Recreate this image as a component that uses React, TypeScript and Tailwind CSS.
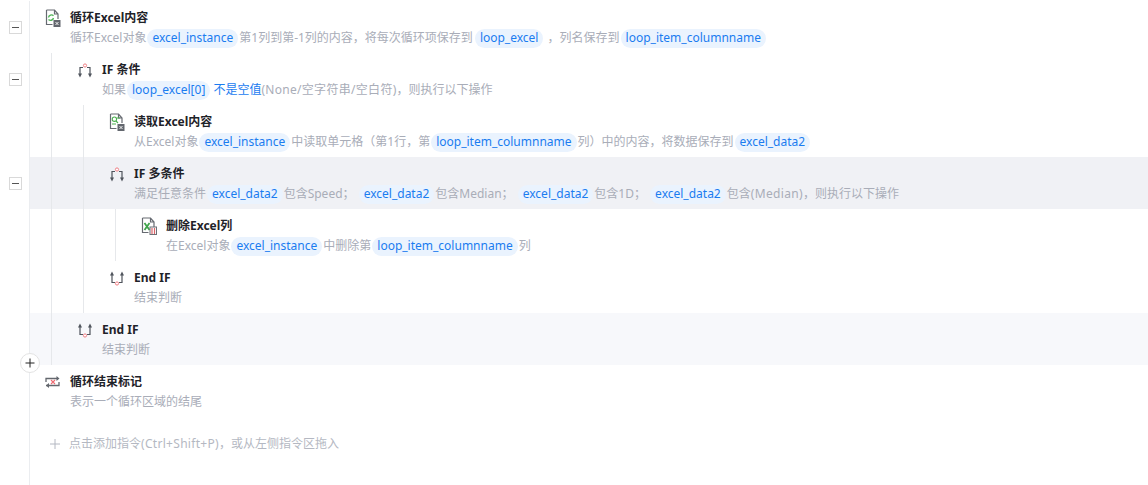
import React from "react";

const FONT = "font-['Noto_Sans','Noto_Sans_CJK_SC',sans-serif]";

function Chip({ children }: { children: React.ReactNode }) {
  return (
    <span className="mx-px inline-flex h-[19px] items-center rounded-[10px] bg-[#eaf3fe] px-[5px] text-[#1a7cf0]">
      {children}
    </span>
  );
}
const B = ({ children }: { children: React.ReactNode }) => <span className="text-[#1a7cf0]">{children}</span>;

function ExcelDoc({ kind }: { kind: "loop" | "read" | "del" }) {
  return (
    <svg width="16" height="18" viewBox="0 0 16 18" fill="none">
      <path d="M1.5 1h8l3.5 4v5M9.5 1v4H13M1.5 1v14.5h6" stroke="#666a71" strokeWidth="1.2" />
      {kind === "loop" && (
        <g stroke="#52b55a" strokeWidth="1.4">
          <path d="M3.5 8.5a3 3 0 0 1 5-1.8" />
          <path d="M8.5 9a3 3 0 0 1-5 1.5" />
        </g>
      )}
      {kind === "read" && (
        <g stroke="#4caf50" strokeWidth="1.1">
          <rect x="3.2" y="4" width="4.4" height="4.4" rx="2.2" />
          <path d="M7 8l2 2M8 5h3M3 11h4" />
        </g>
      )}
      {kind === "del" ? (
        <>
          <path d="M3.5 6l5 7M8.5 6l-5 7" stroke="#3fa34a" strokeWidth="1.8" />
          <rect x="9" y="10" width="6.5" height="7.5" fill="#fff" stroke="#6b6f76" />
          <path d="M11 11v6M13.5 11v6" stroke="#d9646a" strokeWidth="1.2" />
        </>
      ) : (
        <>
          <rect x="8.5" y="11" width="7" height="7" fill="#63676e" />
          <path d="M10.5 13l3 3M13.5 13l-3 3" stroke="#fff" strokeWidth="0.9" />
        </>
      )}
    </svg>
  );
}

function IfIcon() {
  return (
    <svg width="14" height="15" viewBox="0 0 14 15" fill="none">
      <path d="M2 12V4.5h3M9 4.5h3V12" stroke="#4f545c" strokeWidth="1.2" />
      <path d="M0 10.5h4L2 14.5zM10 10.5h4L12 14.5z" fill="#4f545c" />
      <circle cx="7" cy="2.5" r="1.6" stroke="#ef7f85" strokeWidth="1" fill="#fff" />
    </svg>
  );
}

function EndIcon() {
  return (
    <svg width="14" height="15" viewBox="0 0 14 15" fill="none">
      <path d="M2 3v8.5h3M9 11.5h3V3" stroke="#4f545c" strokeWidth="1.2" />
      <path d="M0 4.5h4L2 .5zM10 4.5h4L12 .5z" fill="#4f545c" />
      <circle cx="7" cy="12.5" r="1.6" stroke="#ef7f85" strokeWidth="1" fill="#fff" />
    </svg>
  );
}

function LoopEndIcon() {
  return (
    <svg width="16" height="14" viewBox="0 0 16 14" fill="none">
      <path d="M1 7V3.5h12M1 10.5h13V7" stroke="#63676e" strokeWidth="1.3" />
      <path d="M11.5 1l3 2.5-3 2.5zM4 8l-3 2.5 3 2.5z" fill="#63676e" />
      <path d="M6 5l4 4M10 5l-4 4" stroke="#ee6b72" strokeWidth="1.1" />
    </svg>
  );
}

function Row({
  guides,
  icon,
  title,
  children,
  fold,
  bg = "",
}: {
  guides: number;
  icon: React.ReactNode;
  title: string;
  children: React.ReactNode;
  fold?: boolean;
  bg?: string;
}) {
  return (
    <div className="flex h-[52px]">
      <div className="flex w-[30px] shrink-0 items-center border-r border-[#ebedf0] pl-[9px]">
        {fold && (
          <span className="flex h-[13px] w-[13px] items-center justify-center border border-[#d9d9d9] bg-white">
            <span className="h-px w-[7px] bg-[#555]" />
          </span>
        )}
      </div>
      <div className={`flex min-w-0 flex-1 ${bg}`}>
        <div className="w-[21px] shrink-0" />
        {Array.from({ length: guides }).map((_, i) => (
          <div key={i} className="w-[32px] shrink-0 border-l border-[#e6e8eb]" />
        ))}
        <div className="w-[19px] shrink-0 pt-[8px]">
          <div className="-ml-[7px] flex h-[18px] w-[18px] items-center justify-center">{icon}</div>
        </div>
        <div className="min-w-0 flex-1">
          <div className="mt-[7px] flex h-[20px] items-center text-[12px] font-bold text-[#1f2329]">{title}</div>
          <div className="flex h-[20px] items-center whitespace-pre text-[12px] text-[#a9adb8]">{children}</div>
        </div>
      </div>
    </div>
  );
}

export default function App() {
  return (
    <div className={`relative h-[485px] w-[1148px] overflow-hidden bg-white pt-px ${FONT}`}>
      <Row guides={0} fold icon={<ExcelDoc kind="loop" />} title="循环Excel内容">
        循环Excel对象<Chip>excel_instance</Chip>第1列到第-1列的内容，将每次循环项保存到<span className="w-px" /><Chip>loop_excel</Chip> ，列名保存到<Chip>loop_item_columnname</Chip>
      </Row>
      <Row guides={1} fold icon={<IfIcon />} title="IF 条件">
        如果<Chip>loop_excel[0]</Chip><span className="w-[2px]" /><B>不是空值</B><span className="tracking-[0.3px]">(None/空字符串/空白符)</span>，则执行以下操作
      </Row>
      <Row guides={2} icon={<ExcelDoc kind="read" />} title="读取Excel内容">
        从Excel对象<Chip>excel_instance</Chip>中读取单元格（第1行，第<Chip>loop_item_columnname</Chip>列）中的内容，将数据保存到<Chip>excel_data2</Chip>
      </Row>
      <Row guides={2} fold bg="bg-[#f0f1f5]" icon={<IfIcon />} title="IF 多条件">
        满足任意条件<Chip>excel_data2</Chip>包含Speed； <Chip>excel_data2</Chip>包含Median； <Chip>excel_data2</Chip>包含1D； <Chip>excel_data2</Chip>包含<span className="tracking-[0.35px]">(Median)</span>，则执行以下操作
      </Row>
      <Row guides={3} icon={<ExcelDoc kind="del" />} title="删除Excel列">
        在Excel对象<Chip>excel_instance</Chip>中删除第<Chip>loop_item_columnname</Chip>列
      </Row>
      <Row guides={2} icon={<EndIcon />} title="End IF">
        结束判断
      </Row>
      <Row guides={1} bg="bg-[#f7f8fb]" icon={<EndIcon />} title="End IF">
        结束判断
      </Row>
      <Row guides={0} icon={<LoopEndIcon />} title="循环结束标记">
        表示一个循环区域的结尾
      </Row>
      <div className="flex h-[68px]">
        <div className="w-[30px] shrink-0 border-r border-[#ebedf0]" />
        <div className="mt-[9px] flex h-[36px] flex-1 items-center gap-[8px] pl-[19px] text-[12px] text-[#b4b8c2]">
          <svg width="12" height="12" viewBox="0 0 12 12" fill="none">
            <path d="M6 1v10M1 6h10" stroke="#b4b8c2" strokeWidth="1" />
          </svg>
          <span>
            点击添加指令<span className="tracking-[0.3px]">(Ctrl+Shift+P)</span>，或从左侧指令区拖入
          </span>
        </div>
      </div>
      <div className="absolute top-[353px] left-[20px] flex h-[20px] w-[20px] items-center justify-center rounded-full border border-[#e3e3e3] bg-white">
        <svg width="10" height="10" viewBox="0 0 10 10" fill="none">
          <path d="M5 .5v9M.5 5h9" stroke="#222" strokeWidth="1" />
        </svg>
      </div>
    </div>
  );
}
